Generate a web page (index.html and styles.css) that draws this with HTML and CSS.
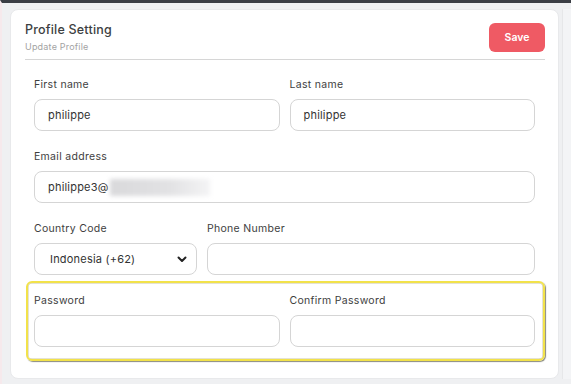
FILE: index.html
```html
<!DOCTYPE html>
<html lang="en">
<head>
    <meta charset="UTF-8">
    <meta name="viewport" content="width=device-width, initial-scale=1.0">
    <title>Profile Setting</title>
    <link rel="stylesheet" href="styles.css">
</head>
<body>
    <div class="page">
        <div class="card">
            <div class="card-header">
                <div class="title-block">
                    <h1>Profile Setting</h1>
                    <p>Update Profile</p>
                </div>
                <button class="btn-save">Save</button>
            </div>

            <div class="form-row">
                <div class="field">
                    <label>First name</label>
                    <div class="input">philippe</div>
                </div>
                <div class="field">
                    <label>Last name</label>
                    <div class="input">philippe</div>
                </div>
            </div>

            <div class="form-row single">
                <div class="field">
                    <label>Email address</label>
                    <div class="input">philippe3@<span class="blurred"></span></div>
                </div>
            </div>

            <div class="form-row phone">
                <div class="field">
                    <label>Country Code</label>
                    <div class="input select">
                        <span>Indonesia (+62)</span>
                        <svg width="10" height="7" viewBox="0 0 10 7"><path d="M1.5 1.5 L5 5 L8.5 1.5" fill="none" stroke="#222" stroke-width="2" stroke-linecap="round" stroke-linejoin="round"/></svg>
                    </div>
                </div>
                <div class="field">
                    <label>Phone Number</label>
                    <div class="input"></div>
                </div>
            </div>

            <div class="form-row highlight">
                <div class="field">
                    <label>Password</label>
                    <div class="input"></div>
                </div>
                <div class="field">
                    <label>Confirm Password</label>
                    <div class="input"></div>
                </div>
            </div>
        </div>
        <div class="side"></div>
    </div>
</body>
</html>
```

FILE: styles.css
```css
* {
    margin: 0;
    padding: 0;
    box-sizing: border-box;
}

body {
    font-family: Inter, 'Open Sans', sans-serif;
    background: #eff0f2;
    border-top: 3px solid #3b3e45;
    border-left: 2px solid #f6e9ec;
    height: 100vh;
    overflow: hidden;
    color: #3a3a3a;
}

.page {
    display: flex;
    padding: 6px 0 0 8px;
}

.card {
    width: 549px;
    flex-shrink: 0;
    background: #fff;
    border: 1px solid #e8e9eb;
    border-radius: 8px;
    padding: 11px 13px 11px 14px;
}

.card-header {
    display: flex;
    align-items: center;
    justify-content: space-between;
    padding-bottom: 6px;
    border-bottom: 1px solid #d6d6d6;
}

.title-block h1 {
    font-size: 12.5px;
    font-weight: 500;
    color: #3d3f42;
    line-height: 16px;
    letter-spacing: 0.2px;
    margin-top: 1px;
}

.title-block p {
    font-size: 9px;
    color: #a3a3a3;
    line-height: 12px;
    letter-spacing: 0.2px;
    margin-top: 3px;
}

.btn-save {
    width: 56px;
    height: 29px;
    border: none;
    border-radius: 6px;
    background: #ef5a64;
    color: #fff;
    font-family: inherit;
    font-size: 10.5px;
    font-weight: 600;
}

.form-row {
    display: grid;
    grid-template-columns: 1fr 1fr;
    gap: 10px;
    padding: 0 10px 0 9px;
    margin-top: 19px;
}

.card-header + .form-row {
    margin-top: 18px;
}

.form-row.single {
    grid-template-columns: 1fr;
}

.form-row.phone {
    grid-template-columns: 163px 1fr;
}

.form-row.highlight {
    margin: 6px 0 0 1px;
    padding: 11px 8px 12px 6px;
    border: 2px solid #f2e24a;
    border-radius: 6px;
    box-shadow: 1px 1px 1px rgba(60, 60, 40, 0.6), inset 0 0 0 0.5px rgba(120, 110, 40, 0.4);
}

.field label {
    display: block;
    font-size: 10.5px;
    line-height: 14px;
    letter-spacing: 0.3px;
    color: #3e3e3e;
    margin-bottom: 7px;
}

.input {
    height: 32px;
    border: 1px solid #d5d5d5;
    border-radius: 8px;
    padding: 0 13px;
    display: flex;
    align-items: center;
    font-size: 11px;
    letter-spacing: 0.2px;
    color: #333;
}

.input.select {
    justify-content: space-between;
    padding: 0 9px 0 15px;
}

.blurred {
    display: inline-block;
    width: 100px;
    height: 17px;
    margin-left: 1px;
    background: linear-gradient(90deg, #d9d9db 0%, #e2e2e4 60%, #f4f4f5 100%);
    filter: blur(2px);
}

.side {
    flex: 1;
    margin-left: 3px;
    height: 370px;
    background: #f3f4f6;
    border-left: 1px solid #e6e7e9;
}
```
